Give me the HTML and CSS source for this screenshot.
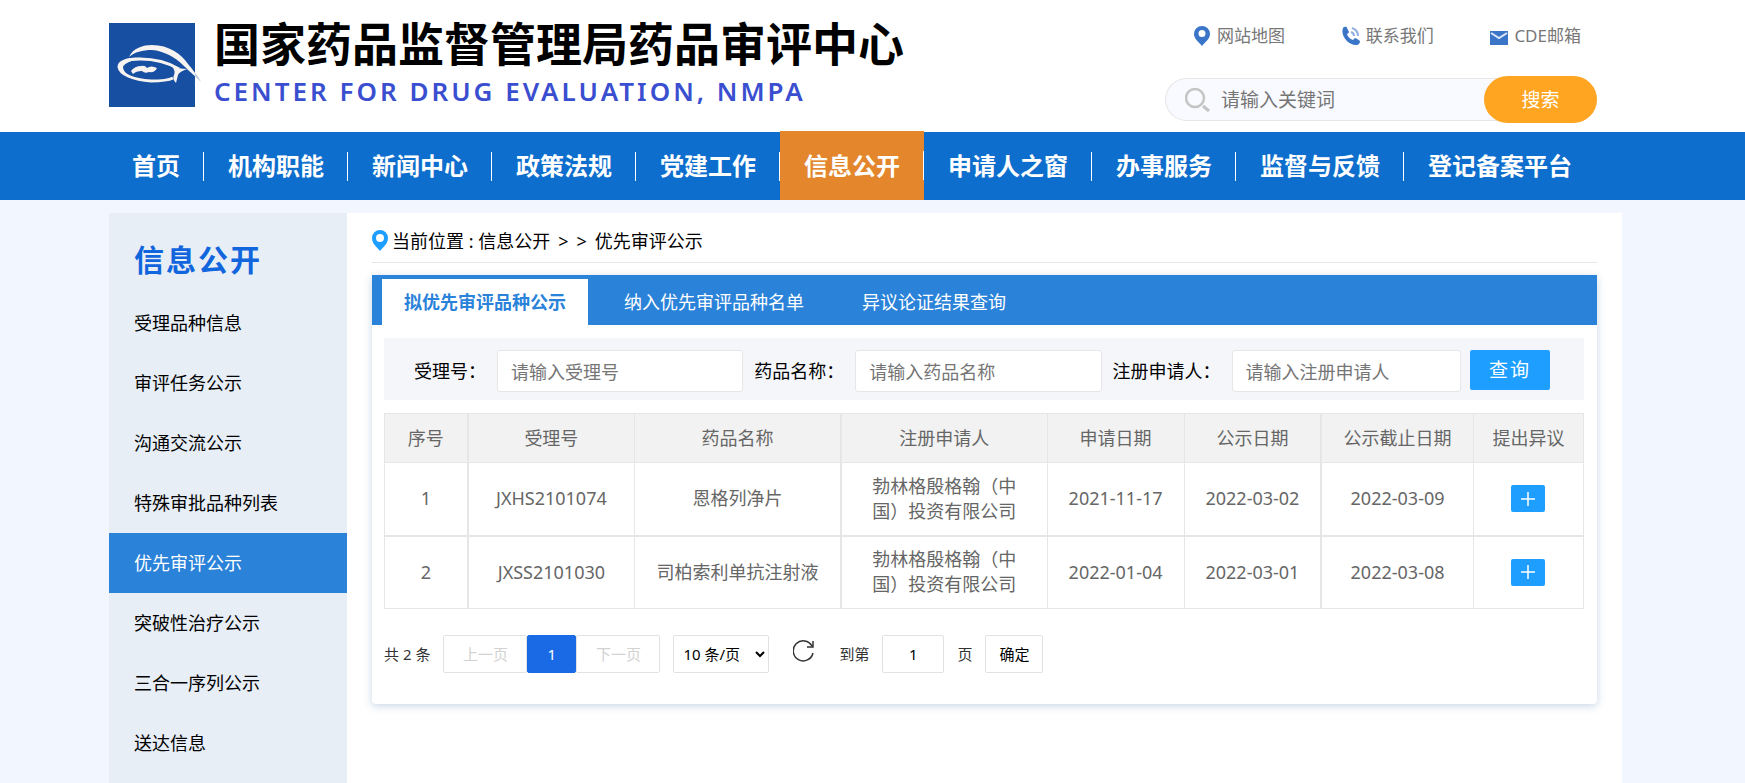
FILE: index.html
```html
<!DOCTYPE html>
<html lang="zh-CN">
  <head>
    <meta charset="UTF-8" />
    <meta name="viewport" content="width=device-width, initial-scale=1.0" />
    <title>国家药品监督管理局药品审评中心</title>
    <link rel="stylesheet" href="styles.css">
  </head>
  <body>
    <header class="header">
      <div class="brand">
        <svg class="logo" viewBox="0 0 92 84" aria-hidden="true">
          <rect width="86" height="84" fill="#174fa3" />
          <path d="M20 34C24 25 34 22 43 22C60 22 72 31 79 41C84 47 88 52 92 59C85 52 80 48 75 43C66 34 55 28 43 27C33 27 26 29 20 34Z" fill="#f6f3f0" />
          <path d="M86 50Q89 53 92 59Q89 56 86 53Z" fill="#b9c6dc" />
          <path d="M70 46C60 40 46 36 31 36C18 36 10 39 10 44C11 51 24 57 42 58C51 58 58 58 64 55" fill="none" stroke="#f6f3f0" stroke-width="3" />
          <path d="M10 42C12 36 22 34 33 35C24 37 15 40 14 44C14 49 20 53 26 55C16 52 9 48 10 42Z" fill="#f6f3f0" />
          <path d="M62 42Q69 46 78 46Q70 49 69 52Q68 56 67 60Q63 56 65 52Q67 48 62 42Z" fill="#f6f3f0" />
          <path d="M22 48Q26 43 32 43Q36 42 38 45Q42 42 48 45Q46 50 40 49Q36 51 33 48Q27 48 24 51Z" fill="#f6f3f0" />
        </svg>
        <div class="brand-text">
          <h1>国家药品监督管理局药品审评中心</h1>
          <p>CENTER FOR DRUG EVALUATION, NMPA</p>
        </div>
      </div>
      <div class="header-right">
        <div class="top-links">
          <a href="#">
            <svg width="18" height="20" viewBox="0 0 18 20"><path fill-rule="evenodd" d="M9 0a8 8 0 0 0-8 8c0 5 5 8 8 12c3-4 8-7 8-12a8 8 0 0 0-8-8zm0 4a3.500 3.500 0 1 1 0 7a3.500 3.500 0 0 1 0-7z" fill="#3a75c8" /></svg>
            网站地图
          </a>
          <a href="#">
            <svg width="18" height="20" viewBox="0 0 18 20"><path d="M1 2C3 0 5 1 5 2L7 6Q7 7 5 8Q6 12 11 14L13 12Q14 12 18 15Q18 18 15 19C7 20-2 10 1 2Z" fill="#3a75c8" /><path d="M9 6Q12 7 12 10M10 2Q16 4 16 10" fill="none" stroke="#8fb0e0" stroke-width="2" /></svg>
            联系我们
          </a>
          <a href="#">
            <svg width="18" height="20" viewBox="0 0 18 20"><rect y="5" width="18" height="14" fill="#3a75c8" /><path d="M1 7L9 12L17 7" fill="none" stroke="#dce8f8" stroke-width="2" /></svg>
            CDE邮箱
          </a>
        </div>
        <form class="site-search">
          <svg width="26" height="26" viewBox="0 0 26 26"><circle cx="10" cy="11" r="9" fill="none" stroke="#c4c4c4" stroke-width="2.500" /><path d="M18 19L24 24" stroke="#c4c4c4" stroke-width="3" /></svg>
          <input type="text" placeholder="请输入关键词" aria-label="请输入关键词" />
          <button type="submit">搜索</button>
        </form>
      </div>
    </header>

    <nav class="nav">
      <a href="#">首页</a>
      <a href="#">机构职能</a>
      <a href="#">新闻中心</a>
      <a href="#">政策法规</a>
      <a href="#">党建工作</a>
      <a href="#" class="active">信息公开</a>
      <a href="#">申请人之窗</a>
      <a href="#">办事服务</a>
      <a href="#">监督与反馈</a>
      <a href="#">登记备案平台</a>
    </nav>

    <div class="page">
      <aside class="sidebar">
        <h2>信息公开</h2>
        <a href="#">受理品种信息</a>
        <a href="#">审评任务公示</a>
        <a href="#">沟通交流公示</a>
        <a href="#">特殊审批品种列表</a>
        <a href="#" class="active">优先审评公示</a>
        <a href="#">突破性治疗公示</a>
        <a href="#">三合一序列公示</a>
        <a href="#">送达信息</a>
      </aside>

      <main class="content">
        <div class="breadcrumb">
          <svg width="16" height="22" viewBox="0 0 16 22"><path fill-rule="evenodd" d="M8 0a8 8 0 0 0-8 8c0 6 5 9 8 13c3-4 8-7 8-13a8 8 0 0 0-8-8zm0 4a4 4 0 1 1 0 8a4 4 0 0 1 0-8z" fill="#1e9fff" /></svg>
          <span>当前位置 : 信息公开</span>
          <span>&gt;</span>
          <span>&gt;</span>
          <span>优先审评公示</span>
        </div>

        <section class="panel">
          <div class="tabs">
            <button type="button" class="active">拟优先审评品种公示</button>
            <button type="button">纳入优先审评品种名单</button>
            <button type="button">异议论证结果查询</button>
          </div>

          <form class="filter">
            <label for="acceptNo">受理号：</label>
            <input type="text" id="acceptNo" placeholder="请输入受理号" />
            <label for="drugName">药品名称：</label>
            <input type="text" id="drugName" placeholder="请输入药品名称" />
            <label for="applicant">注册申请人：</label>
            <input type="text" id="applicant" class="short" placeholder="请输入注册申请人" />
            <button type="submit">查询</button>
          </form>

          <table class="data-table">
            <colgroup>
              <col class="col-index" />
              <col class="col-no" />
              <col class="col-name" />
              <col class="col-name" />
              <col class="col-date" />
              <col class="col-date" />
              <col class="col-end" />
              <col class="col-action" />
            </colgroup>
            <thead>
              <tr>
                <th>序号</th>
                <th>受理号</th>
                <th>药品名称</th>
                <th>注册申请人</th>
                <th>申请日期</th>
                <th>公示日期</th>
                <th>公示截止日期</th>
                <th>提出异议</th>
              </tr>
            </thead>
            <tbody>
              <tr>
                <td>1</td>
                <td>JXHS2101074</td>
                <td>恩格列净片</td>
                <td>勃林格殷格翰（中国）投资有限公司</td>
                <td>2021-11-17</td>
                <td>2022-03-02</td>
                <td>2022-03-09</td>
                <td><button type="button" class="add" aria-label="提出异议"><svg width="14" height="14" viewBox="0 0 14 14"><path d="M7 0V14M0 7H14" stroke="#fff" stroke-width="1.500" /></svg></button></td>
              </tr>
              <tr>
                <td>2</td>
                <td>JXSS2101030</td>
                <td>司柏索利单抗注射液</td>
                <td>勃林格殷格翰（中国）投资有限公司</td>
                <td>2022-01-04</td>
                <td>2022-03-01</td>
                <td>2022-03-08</td>
                <td><button type="button" class="add" aria-label="提出异议"><svg width="14" height="14" viewBox="0 0 14 14"><path d="M7 0V14M0 7H14" stroke="#fff" stroke-width="1.500" /></svg></button></td>
              </tr>
            </tbody>
          </table>

          <div class="pager">
            <span>共 2 条</span>
            <div class="pages">
              <button type="button" disabled>上一页</button>
              <button type="button" class="current">1</button>
              <button type="button" disabled>下一页</button>
            </div>
            <select aria-label="每页条数">
              <option>10 条/页</option>
            </select>
            <button type="button" class="refresh" aria-label="刷新"><svg width="22" height="22" viewBox="0 0 22 22"><path d="M20 13A10 10 0 1 1 19 6M20 1V7H14" fill="none" stroke="#333" stroke-width="1.500" /></svg></button>
            <label for="pageNo">到第</label>
            <input type="text" id="pageNo" value="1" />
            <span>页</span>
            <button type="button" class="go">确定</button>
          </div>
        </section>
      </main>
    </div>
  </body>
</html>
```

FILE: styles.css
```css
* {
  box-sizing: border-box;
}
body {
  margin: 0;
  min-height: 100vh;
  display: flex;
  flex-direction: column;
  font-family: "Noto Sans", "Noto Sans CJK SC", sans-serif;
  font-size: 18px;
  line-height: 24px;
  color: #000;
  background: #f2f7ff;
}
a {
  color: inherit;
  text-decoration: none;
}
button,
input,
select {
  font: inherit;
}
button {
  padding: 0;
  border: none;
  cursor: pointer;
}
input::placeholder {
  color: #757575;
  opacity: 1;
}

/* header */
.header {
  display: flex;
  justify-content: space-between;
  height: 132px;
  padding: 0 148px 0 109px;
  background: #fff;
}
.brand {
  display: flex;
  gap: 13px;
  padding-top: 21px;
}
.logo {
  width: 92px;
  height: 84px;
  margin-top: 2px;
}
.brand-text h1 {
  margin: 0;
  font-size: 46px;
  line-height: 44px;
  font-weight: 700;
  white-space: nowrap;
}
.brand-text p {
  margin: 10px 0 0;
  font-size: 26px;
  line-height: 32px;
  font-weight: 600;
  letter-spacing: 3px;
  color: #3a4ed0;
}
.header-right {
  width: 432px;
}
.top-links {
  display: flex;
  justify-content: space-between;
  padding: 24px 16px 0 28px;
  font-size: 17px;
  color: #777;
}
.top-links a {
  display: flex;
  align-items: center;
  gap: 6px;
}
.site-search {
  display: flex;
  align-items: center;
  height: 43px;
  margin-top: 30px;
  padding-left: 19px;
  border: 1px solid #e6e6e6;
  border-right: none;
  border-radius: 22px;
  background: #f9faff;
  font-size: 19px;
}
.site-search input {
  flex: 1;
  min-width: 0;
  padding: 0 10px;
  border: none;
  background: none;
}
.site-search button {
  width: 113px;
  height: 47px;
  flex-shrink: 0;
  border-radius: 24px;
  background: #ffa522;
  color: #fff;
}

/* navigation */
.nav {
  display: flex;
  height: 68px;
  padding-left: 108px;
  background: #0e6ecd;
  color: #fff;
  font-size: 24px;
  font-weight: 700;
}
.nav a {
  display: flex;
  align-items: center;
  padding: 0 24px;
  white-space: nowrap;
  background: linear-gradient(#fff, #fff) no-repeat right center / 1px 29px;
}
.nav a:last-child {
  background: none;
}
.nav a.active {
  margin-top: -1px;
  background-color: #e3862c;
}

/* page body */
.page {
  flex: 1;
  display: flex;
  margin: 13px 123px 0 109px;
  background: #fff;
}
.sidebar {
  width: 238px;
  flex-shrink: 0;
  background: #e7eef6;
}
.sidebar h2 {
  margin: 0;
  padding: 25px 25px 11px;
  font-size: 30px;
  line-height: 44px;
  letter-spacing: 2px;
  color: #1165dd;
}
.sidebar a {
  display: block;
  padding: 0 25px;
  line-height: 60px;
}
.sidebar a.active {
  background: #2a82d9;
  color: #fff;
}
.content {
  flex: 1;
  min-width: 0;
  padding: 0 25px;
}
.breadcrumb {
  display: flex;
  align-items: center;
  gap: 8px;
  height: 50px;
  padding-top: 6px;
  border-bottom: 1px solid #e6e6e6;
}
.breadcrumb svg {
  margin-right: -4px;
}
.panel {
  margin-top: 12px;
  padding-bottom: 31px;
  border-radius: 4px;
  box-shadow: 0 2px 8px rgba(30, 90, 150, 0.25);
}

/* tabs */
.tabs {
  display: flex;
  gap: 14px;
  height: 50px;
  padding: 4px 10px 0;
  background: #2a82d9;
}
.tabs button {
  padding: 0 22px;
  background: none;
  color: #fff;
}
.tabs button.active {
  background: #fff;
  color: #2a82d9;
  font-weight: 700;
}

/* filter form */
.filter {
  display: flex;
  gap: 11px;
  height: 62px;
  margin: 13px 13px 13px 12px;
  padding: 12px 34px 0 30px;
  background: #f4f6fa;
}
.filter label {
  line-height: 42px;
  white-space: nowrap;
}
.filter input {
  flex: 246 1 0;
  min-width: 0;
  height: 42px;
  padding: 2px 13px 0;
  border: 1px solid #e6e6e6;
  border-radius: 3px;
  background: #fff;
}
.filter input.short {
  flex-grow: 227;
}
.filter button {
  width: 80px;
  height: 40px;
  margin-left: -2px;
  border-radius: 2px;
  background: #1e9fff;
  color: #fff;
  font-size: 19px;
  letter-spacing: 2px;
}

/* table */
.data-table {
  width: calc(100% - 25px);
  margin: 0 12px;
  table-layout: fixed;
  border-collapse: collapse;
  line-height: 25px;
  color: #666;
  text-align: center;
}
.data-table th,
.data-table td {
  height: 73px;
  padding: 0 20px;
  border: 1px solid #e6e6e6;
}
.data-table th {
  height: 49px;
  padding: 0;
  background: #f2f2f2;
  font-weight: 400;
}
.data-table tr > :nth-child(1),
.data-table tr > :nth-child(3),
.data-table tr > :nth-child(6) {
  border-right-width: 2px;
}
.data-table tbody tr:first-child td {
  border-bottom-width: 2px;
}
.col-index {
  width: 83px;
}
.col-no {
  width: 167px;
}
.col-name {
  width: 206px;
}
.col-date {
  width: 137px;
}
.col-end {
  width: 152px;
}
.col-action {
  width: 110px;
}
.add {
  display: inline-flex;
  align-items: center;
  justify-content: center;
  width: 34px;
  height: 27px;
  border-radius: 2px;
  background: #1e9fff;
}

/* pager */
.pager {
  display: flex;
  align-items: center;
  gap: 13px;
  margin: 26px 12px 0;
  font-size: 15px;
  color: #333;
}
.pager button,
.pager input,
.pager select {
  height: 38px;
  border: 1px solid #e2e2e2;
  border-radius: 2px;
  background: #fff;
  color: #000;
}
.pages {
  display: flex;
}
.pages button {
  width: 84px;
}
.pages button:disabled {
  color: #d2d2d2;
}
.pages button.current {
  width: 49px;
  border-color: #1a6ae5;
  background: #1a6ae5;
  color: #fff;
}
.pager select {
  width: 96px;
  padding: 0 5px;
}
.pager .refresh {
  width: 44px;
  border: none;
}
.pager input {
  width: 62px;
  text-align: center;
}
.pager .go {
  width: 58px;
}
```
